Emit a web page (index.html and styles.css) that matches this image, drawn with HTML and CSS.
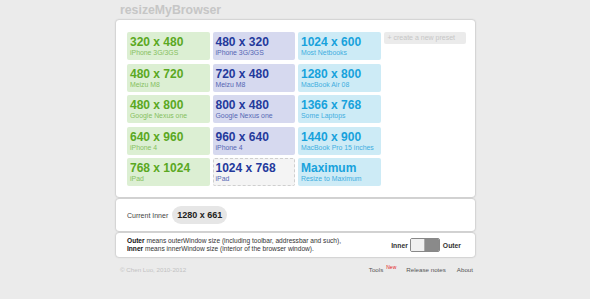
FILE: index.html
```html
<!DOCTYPE html>
<html>
<head>
<meta charset="utf-8">
<link rel="stylesheet" href="styles.css">
</head>
<body>
<div class="wrap">
  <div class="logo">resizeMyBrowser</div>
  <div class="box presets">
    <div class="col green">
      <div class="card"><div class="t">320 x 480</div><div class="s">iPhone 3G/3GS</div></div>
      <div class="card"><div class="t">480 x 720</div><div class="s">Meizu M8</div></div>
      <div class="card"><div class="t">480 x 800</div><div class="s">Google Nexus one</div></div>
      <div class="card"><div class="t">640 x 960</div><div class="s">iPhone 4</div></div>
      <div class="card"><div class="t">768 x 1024</div><div class="s">iPad</div></div>
    </div>
    <div class="col blue">
      <div class="card"><div class="t">480 x 320</div><div class="s">iPhone 3G/3GS</div></div>
      <div class="card"><div class="t">720 x 480</div><div class="s">Meizu M8</div></div>
      <div class="card"><div class="t">800 x 480</div><div class="s">Google Nexus one</div></div>
      <div class="card"><div class="t">960 x 640</div><div class="s">iPhone 4</div></div>
      <div class="card empty"><div class="t">1024 x 768</div><div class="s">iPad</div></div>
    </div>
    <div class="col cyan">
      <div class="card"><div class="t">1024 x 600</div><div class="s">Most Netbooks</div></div>
      <div class="card"><div class="t">1280 x 800</div><div class="s">MacBook Air 08</div></div>
      <div class="card"><div class="t">1366 x 768</div><div class="s">Some Laptops</div></div>
      <div class="card"><div class="t">1440 x 900</div><div class="s">MacBook Pro 15 inches</div></div>
      <div class="card"><div class="t">Maximum</div><div class="s">Resize to Maximum</div></div>
    </div>
    <div class="col">
      <div class="create">+ create a new preset</div>
    </div>
  </div>
  <div class="box current">
    <span class="label">Current Inner</span>
    <span class="pill">1280 x 661</span>
  </div>
  <div class="box info">
    <div class="desc">
      <div><b>Outer</b> means outerWindow size (including toolbar, addressbar and such),</div>
      <div><b>Inner</b> means innerWindow size (interior of the browser window).</div>
    </div>
    <div class="toggle">
      <b>Inner</b>
      <span class="switch"><span class="on"></span><span class="off"></span></span>
      <b>Outer</b>
    </div>
  </div>
  <div class="footer">
    <span class="copy">© Chen Luo, 2010-2012</span>
    <span class="links">
      <span class="tools">Tools<span class="new">New</span></span>
      <span>Release notes</span>
      <span>About</span>
    </span>
  </div>
</div>
</body>
</html>
```

FILE: styles.css
```css
* { box-sizing: border-box; }
body {
  margin: 0;
  background: #ebebeb;
  font-family: "Liberation Sans", Arial, sans-serif;
}
.wrap {
  width: 360px;
  margin: 0 auto;
  padding-left: 1px;
}
.logo {
  height: 20px;
  padding: 3px 0 0 4px;
  font-size: 12.3px;
  font-weight: bold;
  color: #c6c6c6;
  line-height: 14px;
}
.box {
  background: #fff;
  border-radius: 3px;
  box-shadow: 0 0 2px rgba(0,0,0,0.35);
  margin-bottom: 2px;
}
.presets {
  display: flex;
  gap: 3px;
  padding: 12px 0 11px 11px;
  height: 177px;
}
.col {
  display: flex;
  flex-direction: column;
  gap: 3.5px;
  width: 82.5px;
}
.card {
  height: 28px;
  border-radius: 2px;
  padding: 3px 0 0 3px;
}
.t {
  font-size: 12px;
  font-weight: bold;
  line-height: 14px;
}
.s {
  font-size: 6.9px;
  line-height: 8px;
}
.green .card { background: #dcefd3; }
.green .t { color: #5aa822; }
.green .s { color: #86bf60; }
.blue .card { background: #d6d9ef; }
.blue .t { color: #24399c; }
.blue .s { color: #5567b4; }
.cyan .card { background: #cdebf6; }
.cyan .t { color: #17a2dc; }
.cyan .s { color: #3faedf; }
.blue .card.empty {
  background: #f4f4f4;
  border: 1px dashed #cfcfcf;
  padding: 2px 0 0 2px;
}
.create {
  height: 12px;
  background: #ebebeb;
  border-radius: 2px;
  color: #c6c6c6;
  font-size: 7px;
  line-height: 12px;
  padding-left: 4px;
}
.current {
  height: 32px;
  display: flex;
  align-items: center;
  padding-left: 11px;
  gap: 4px;
}
.label {
  font-size: 7px;
  color: #444;
}
.pill {
  background: #e6e6e6;
  border-radius: 9px;
  height: 18px;
  line-height: 18px;
  padding: 0 5px;
  font-size: 9px;
  font-weight: bold;
  color: #222;
}
.info {
  height: 24px;
  display: flex;
  align-items: center;
  justify-content: space-between;
  padding: 0 14px 0 11px;
  margin-top: 1px;
}
.desc {
  font-size: 6.6px;
  line-height: 8px;
  color: #333;
}
.desc b { color: #111; }
.toggle {
  display: flex;
  align-items: center;
  gap: 2.5px;
  font-size: 6.8px;
  color: #333;
}
.switch {
  display: flex;
  width: 30px;
  height: 14px;
  border: 1px solid #888;
  border-radius: 2px;
  overflow: hidden;
}
.switch .on {
  flex: 1;
  background: #f0f0f0;
  border-right: 1px solid #aaa;
}
.switch .off {
  flex: 1.2;
  background: #8a8a8a;
}
.footer {
  display: flex;
  justify-content: space-between;
  align-items: flex-end;
  height: 15px;
  padding: 0 2px 0 4px;
  font-size: 6.2px;
  line-height: 8px;
}
.copy { color: #c2c2c2; }
.links {
  display: flex;
  align-items: flex-end;
  gap: 11px;
  color: #555;
}
.tools { position: relative; padding-right: 13px; margin-right: -1px; }
.new {
  position: absolute;
  right: 0;
  top: -2px;
  color: #e42222;
  font-size: 5px;
  line-height: 6px;
}
```
